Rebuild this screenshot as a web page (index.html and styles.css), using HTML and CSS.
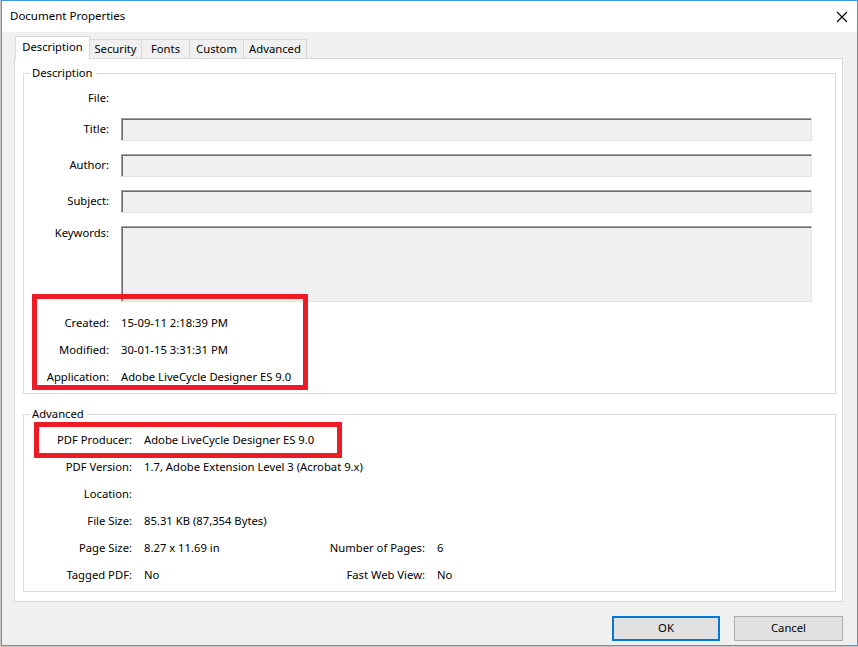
FILE: index.html
```html
<!DOCTYPE html>
<html lang="en">
<head>
<meta charset="utf-8">
<title>Document Properties</title>
<link rel="stylesheet" href="styles.css">
</head>
<body>
<div class="window">
  <div class="titlebar">
    <span class="title">Document Properties</span>
    <svg class="close" width="12" height="12" viewBox="0 0 12 12"><path d="M1 1 L11 11 M11 1 L1 11" stroke="#000" stroke-width="1.1" fill="none"/></svg>
  </div>
  <div class="content">
    <div class="tabs">
      <div class="tab active t-desc">Description</div>
      <div class="tab t-sec">Security</div>
      <div class="tab t-fonts">Fonts</div>
      <div class="tab t-custom">Custom</div>
      <div class="tab t-adv">Advanced</div>
    </div>
    <div class="panel">
      <fieldset class="group group-desc">
        <legend>Description</legend>
        <div class="row r-file"><span class="lbl">File:</span><span class="val"></span></div>
        <div class="row r-field first-field"><span class="lbl">Title:</span><span class="field"></span></div>
        <div class="row r-field"><span class="lbl">Author:</span><span class="field"></span></div>
        <div class="row r-field"><span class="lbl">Subject:</span><span class="field"></span></div>
        <div class="row r-keywords"><span class="lbl">Keywords:</span><span class="field tall"></span></div>
        <div class="row r-info r-created"><span class="lbl">Created:</span><span class="val">15-09-11 2:18:39 PM</span></div>
        <div class="row r-info"><span class="lbl">Modified:</span><span class="val">30-01-15 3:31:31 PM</span></div>
        <div class="row r-info"><span class="lbl">Application:</span><span class="val">Adobe LiveCycle Designer ES 9.0</span></div>
      </fieldset>
      <fieldset class="group group-adv">
        <legend>Advanced</legend>
        <div class="adv-grid">
          <span class="lbl">PDF Producer:</span><span class="val wide">Adobe LiveCycle Designer ES 9.0</span>
          <span class="lbl">PDF Version:</span><span class="val wide">1.7, Adobe Extension Level 3 (Acrobat 9.x)</span>
          <span class="lbl">Location:</span><span class="val wide"></span>
          <span class="lbl">File Size:</span><span class="val wide">85.31 KB (87,354 Bytes)</span>
          <span class="lbl">Page Size:</span><span class="val">8.27 x 11.69 in</span><span class="lbl">Number of Pages:</span><span class="val">6</span>
          <span class="lbl">Tagged PDF:</span><span class="val">No</span><span class="lbl">Fast Web View:</span><span class="val">No</span>
        </div>
      </fieldset>
    </div>
    <div class="buttons">
      <button class="btn default">OK</button>
      <button class="btn cancel">Cancel</button>
    </div>
  </div>
  <div class="mark mark-dates"></div>
  <div class="mark mark-producer"></div>
</div>
</body>
</html>
```
FILE: styles.css
```css
* { box-sizing: border-box; }
html, body { margin: 0; padding: 0; }
body {
  background: #c8c8c8;
  font-family: "Noto Sans", "Open Sans", "DejaVu Sans", sans-serif;
  font-size: 11.25px;
  line-height: 16px;
  color: #000;
}
.window {
  position: relative;
  margin-left: 1px;
  width: 857px;
  height: 646px;
  border: 1px solid #3d9be6;
  background: #f0f0f0;
  display: flex;
  flex-direction: column;
}
.titlebar {
  height: 31px;
  background: #fff;
  display: flex;
  align-items: center;
  justify-content: space-between;
  padding: 0 9px 0 8px;
  flex: none;
}
.title { font-size: 11.5px; padding-bottom: 2px; }
.close { display: block; }
.content {
  flex: 1;
  display: flex;
  flex-direction: column;
  padding: 4px 14px 0 12px;
}
.tabs {
  display: flex;
  align-items: flex-start;
  padding-left: 1px;
  height: 22px;
  position: relative;
  z-index: 1;
}
.tab {
  height: 19px;
  margin-top: 3px;
  margin-left: -1px;
  border: 1px solid #d9d9d9;
  border-bottom: none;
  background: #f0f0f0;
  display: flex;
  align-items: center;
  justify-content: center;
}
.tab.active {
  height: 23px;
  margin-top: 0;
  margin-left: 0;
  background: #fff;
  position: relative;
  z-index: 2;
  padding-bottom: 2px;
}
.t-desc { width: 75px; }
.t-sec { width: 53px; }
.t-fonts { width: 49px; }
.t-custom { width: 55px; }
.t-adv { width: 64px; }
.panel {
  height: 544px;
  border: 1px solid #d9d9d9;
  background: #fff;
  display: flex;
  flex-direction: column;
  padding: 0 6px 0 8px;
  flex: none;
}
.group {
  margin: 0;
  border: 1px solid #dcdcdc;
  padding: 0;
  min-width: 0;
}
.group legend {
  margin-left: 6px;
  padding: 0 3px 0 2px;
  line-height: 16px;
}
.group-desc {
  margin-top: 6px;
  height: 329px;
  padding-right: 23px;
}
.group-adv {
  margin-top: 12px;
  height: 186px;
}
.row {
  display: flex;
  align-items: center;
  height: 23px;
  gap: 12px;
}
.lbl, .val { padding-bottom: 2px; }
.lbl {
  text-align: right;
  white-space: nowrap;
}
.row .lbl { width: 85px; flex: none; }
.row .val { white-space: nowrap; }
.r-file { margin-top: 6px; }
.r-field { margin-top: 13px; }
.r-field.first-field { margin-top: 8px; }
.field {
  flex: 1;
  align-self: stretch;
  background: #f0f0f0;
  border-top: 1px solid #a0a0a0;
  border-left: 1px solid #a0a0a0;
  border-right: 1px solid #e3e3e3;
  border-bottom: 1px solid #e3e3e3;
  box-shadow: inset 1px 1px 0 #6d6d6d;
}
.r-keywords {
  margin-top: 13px;
  height: 76px;
  align-items: flex-start;
}
.r-keywords .lbl { padding-bottom: 0; margin-top: -1px; }
.r-created { margin-top: 10px; }
.r-info + .r-info { margin-top: 4px; }
.adv-grid {
  display: grid;
  grid-template-columns: 108px 150px 119px 1fr;
  grid-auto-rows: 27px;
  column-gap: 12px;
  align-items: center;
  padding-top: 5px;
}
.adv-grid .val { white-space: nowrap; }
.adv-grid .wide { grid-column: 2 / -1; }
.buttons {
  display: flex;
  justify-content: flex-end;
  gap: 14px;
  margin-top: 14px;
}
.btn {
  width: 108px;
  height: 25px;
  background: #e1e1e1;
  border: 1px solid #adadad;
  font: inherit;
  color: #000;
  padding: 0 0 1px;
  margin: 0;
}
.btn.cancel { width: 109px; }
.btn.default {
  border: 2px solid #0078d7;
}
.mark {
  position: absolute;
  border: 5px solid #ed1c24;
}
.mark-dates {
  left: 30px;
  top: 293px;
  width: 276px;
  height: 96px;
}
.mark-producer {
  left: 32px;
  top: 421px;
  width: 308px;
  height: 36px;
}
```
